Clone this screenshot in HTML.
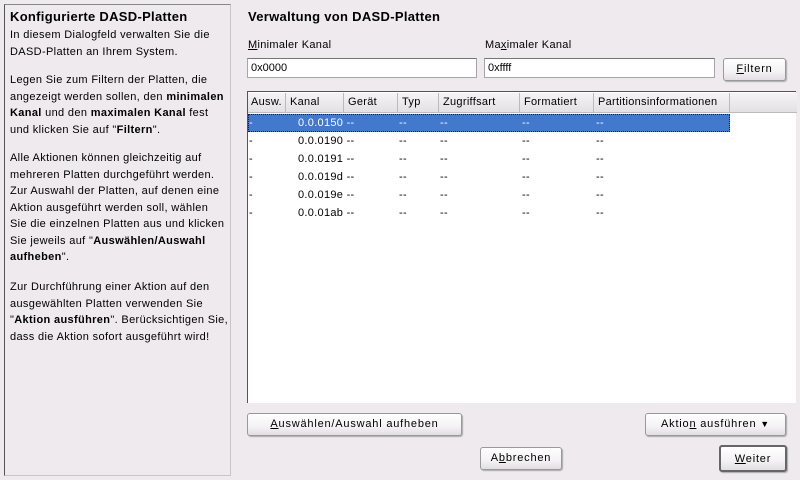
<!DOCTYPE html>
<html><head><meta charset="utf-8"><style>
*{margin:0;padding:0;box-sizing:border-box}
body{width:800px;height:480px;background:#eeeaee;font-family:"Liberation Sans","DejaVu Sans",sans-serif;font-size:11px;color:#000;position:relative;overflow:hidden}
.abs{position:absolute}
#left{left:4px;top:4px;width:227px;height:472px;border:1px solid #c8c4c8;border-left-color:#555;border-top-color:#888}
#left .t{position:absolute;left:5px;top:4px;font-weight:bold;font-size:13px;letter-spacing:.3px}
#left .p{position:absolute;left:5px;line-height:16.5px;font-size:11px;white-space:nowrap;letter-spacing:.35px}
.h{font-weight:bold;font-size:13px;letter-spacing:.3px}
.inp{position:absolute;height:20px;background:#fff;border:1px solid #a8a4a8;border-top-color:#777;padding-left:3px;line-height:18px;font-size:11px}
.btn{position:absolute;height:23px;border:1px solid #999;border-radius:3px;background:linear-gradient(#fff,#f4f2f4 60%,#e2dee2);box-shadow:1px 1px 1px #aaa;text-align:center;line-height:21px;font-size:11px;letter-spacing:.8px}
#tbl{left:247px;top:91px;width:549px;height:312px;background:#fff;border-left:1px solid #555;border-top:1px solid #555;letter-spacing:.3px}
.hd{position:absolute;top:1px;height:20px;background:linear-gradient(#f6f4f6,#e4e0e4);border-right:1px solid #bbb;border-bottom:1px solid #bbb;line-height:19px;padding-left:4px;white-space:nowrap}
.row{position:absolute;left:0;width:482px;height:18px;line-height:18px}
.c{position:absolute;top:0;white-space:nowrap}
.sel{background:#4279cc;color:#fff;outline:1px dotted #123;outline-offset:-1px}
.lab{letter-spacing:.3px}
</style></head><body>
<div id="left" class="abs">
<div class="t">Konfigurierte DASD-Platten</div>
<div class="p" style="top:22px">In diesem Dialogfeld verwalten Sie die<br>DASD-Platten an Ihrem System.</div>
<div class="p" style="top:67px">Legen Sie zum Filtern der Platten, die<br>angezeigt werden sollen, den <b>minimalen</b><br><b>Kanal</b> und den <b>maximalen Kanal</b> fest<br>und klicken Sie auf "<b>Filtern</b>".</div>
<div class="p" style="top:145px">Alle Aktionen können gleichzeitig auf<br>mehreren Platten durchgeführt werden.<br>Zur Auswahl der Platten, auf denen eine<br>Aktion ausgeführt werden soll, wählen<br>Sie die einzelnen Platten aus und klicken<br>Sie jeweils auf "<b>Auswählen/Auswahl</b><br><b>aufheben</b>".</div>
<div class="p" style="top:274px">Zur Durchführung einer Aktion auf den<br>ausgewählten Platten verwenden Sie<br>"<b>Aktion ausführen</b>". Berücksichtigen Sie,<br>dass die Aktion sofort ausgeführt wird!</div>
</div>
<div class="abs h" style="left:248px;top:9px">Verwaltung von DASD-Platten</div>
<div class="abs lab" style="left:248px;top:39px"><u>M</u>inimaler Kanal</div>
<div class="abs lab" style="left:485px;top:39px">Ma<u>x</u>imaler Kanal</div>
<div class="inp" style="left:247px;top:58px;width:230px">0x0000</div>
<div class="inp" style="left:484px;top:58px;width:231px">0xffff</div>
<div class="btn" style="left:723px;top:58px;width:63px"><u>F</u>iltern</div>
<div id="tbl" class="abs">
<div class="hd" style="left:0;width:38px;padding-left:3px">Ausw.</div>
<div class="hd" style="left:38px;width:58px">Kanal</div>
<div class="hd" style="left:96px;width:54px">Gerät</div>
<div class="hd" style="left:150px;width:41px">Typ</div>
<div class="hd" style="left:191px;width:81px">Zugriffsart</div>
<div class="hd" style="left:272px;width:74px">Formatiert</div>
<div class="hd" style="left:346px;width:136px">Partitionsinformationen</div>
<div class="hd" style="left:482px;width:67px;border-right:none"></div>
<div class="row sel" style="top:22px"><span class="c" style="left:1px">-</span><span class="c" style="left:50px">0.0.0150 --</span><span class="c" style="left:151px">--</span><span class="c" style="left:192px">--</span><span class="c" style="left:274px">--</span><span class="c" style="left:348px">--</span></div>
<div class="row" style="top:40px"><span class="c" style="left:1px">-</span><span class="c" style="left:50px">0.0.0190 --</span><span class="c" style="left:151px">--</span><span class="c" style="left:192px">--</span><span class="c" style="left:274px">--</span><span class="c" style="left:348px">--</span></div>
<div class="row" style="top:58px"><span class="c" style="left:1px">-</span><span class="c" style="left:50px">0.0.0191 --</span><span class="c" style="left:151px">--</span><span class="c" style="left:192px">--</span><span class="c" style="left:274px">--</span><span class="c" style="left:348px">--</span></div>
<div class="row" style="top:76px"><span class="c" style="left:1px">-</span><span class="c" style="left:50px">0.0.019d --</span><span class="c" style="left:151px">--</span><span class="c" style="left:192px">--</span><span class="c" style="left:274px">--</span><span class="c" style="left:348px">--</span></div>
<div class="row" style="top:94px"><span class="c" style="left:1px">-</span><span class="c" style="left:50px">0.0.019e --</span><span class="c" style="left:151px">--</span><span class="c" style="left:192px">--</span><span class="c" style="left:274px">--</span><span class="c" style="left:348px">--</span></div>
<div class="row" style="top:112px"><span class="c" style="left:1px">-</span><span class="c" style="left:50px">0.0.01ab --</span><span class="c" style="left:151px">--</span><span class="c" style="left:192px">--</span><span class="c" style="left:274px">--</span><span class="c" style="left:348px">--</span></div>
</div>
<div class="btn" style="left:247px;top:413px;width:215px"><u>A</u>uswählen/Auswahl aufheben</div>
<div class="btn" style="left:645px;top:413px;width:141px">Aktio<u>n</u> ausführen <span style="font-size:9px">&#9660;</span></div>
<div class="btn" style="left:480px;top:447px;width:82px">A<u>b</u>brechen</div>
<div class="btn" style="left:719px;top:445px;width:68px;height:27px;line-height:25px;border:2px solid #666"><u>W</u>eiter</div>
</body></html>
